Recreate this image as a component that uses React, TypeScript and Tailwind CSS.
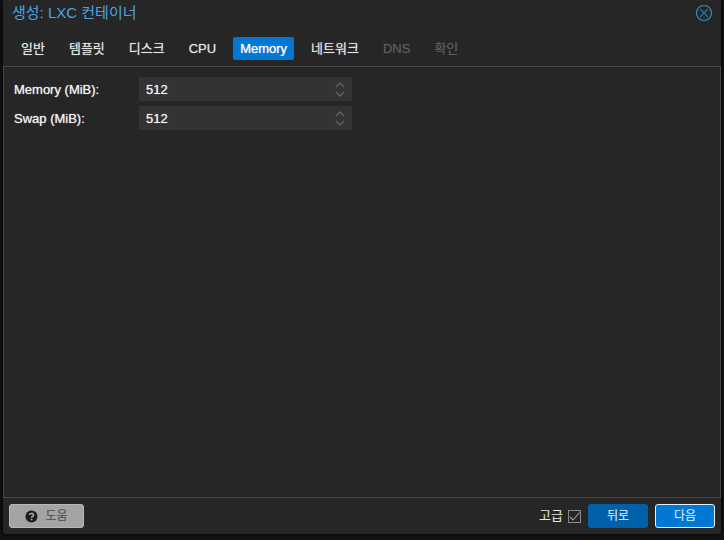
import { useState } from 'react';

interface Tab {
    label: string;
    enabled: boolean;
}

const tabs: Tab[] = [
    { label: '일반', enabled: true },
    { label: '템플릿', enabled: true },
    { label: '디스크', enabled: true },
    { label: 'CPU', enabled: true },
    { label: 'Memory', enabled: true },
    { label: '네트워크', enabled: true },
    { label: 'DNS', enabled: false },
    { label: '확인', enabled: false },
];

interface SpinnerFieldProps {
    id: string;
    label: string;
    value: number;
    onChange: (value: number) => void;
}

function SpinnerField({ id, label, value, onChange }: SpinnerFieldProps) {
    return (
        <div className="flex items-center">
            <label htmlFor={id} className="w-[125px] shrink-0 pt-0.5 text-[#f2f2f2] [text-shadow:0_0_1px_#cccccc]">
                {label}
            </label>
            <div className="flex h-6 w-[213px] items-center bg-[#333333]">
                <input
                    id={id}
                    type="text"
                    inputMode="numeric"
                    value={value}
                    onChange={(e) => onChange(Number(e.target.value) || 0)}
                    className="h-6 min-w-0 flex-1 bg-transparent px-[7px] text-[#f2f2f2] outline-none [text-shadow:0_0_1px_#cccccc]"
                />
                <div className="flex w-6 flex-col items-center">
                    <button type="button" aria-label="+" onClick={() => onChange(value + 32)} className="flex h-[9px] w-full items-center justify-center">
                        <svg width="10" height="6" viewBox="0 0 10 6" fill="none" stroke="#626262" strokeWidth="1.3">
                            <path d="M1 5 L5 1 L9 5" />
                        </svg>
                    </button>
                    <button type="button" aria-label="-" onClick={() => onChange(Math.max(0, value - 32))} className="flex h-[9px] w-full items-center justify-center">
                        <svg width="10" height="6" viewBox="0 0 10 6" fill="none" stroke="#626262" strokeWidth="1.3">
                            <path d="M1 1 L5 5 L9 1" />
                        </svg>
                    </button>
                </div>
            </div>
        </div>
    );
}

export default function App() {
    const [active, setActive] = useState('Memory');
    const [memory, setMemory] = useState(512);
    const [swap, setSwap] = useState(512);
    const [advanced, setAdvanced] = useState(true);

    return (
        <div className="flex min-h-screen flex-col bg-[#131313] px-[3px] pb-[6px] font-['Liberation_Sans','Noto_Sans_CJK_KR',sans-serif] text-[13px] leading-5">
            <div className="flex flex-1 flex-col rounded-b-[3px] bg-[#262626] shadow-[0_0_5px_#000000]">
                {/* Title bar */}
                <header className="flex h-[26px] items-center justify-between pr-2 pl-[9px]">
                    <h1 className="text-[15px] text-[#4ba3e3]">생성: LXC 컨테이너</h1>
                    <button type="button" aria-label="닫기">
                        <svg width="18" height="18" viewBox="0 0 18 18" fill="none" stroke="#2a94c6">
                            <circle cx="9" cy="9" r="7.5" strokeWidth="1.2" />
                            <path d="M5 5 L13 13 M13 5 L5 13" stroke="#1f7ba8" strokeWidth="1.2" />
                        </svg>
                    </button>
                </header>

                {/* Wizard steps */}
                <nav className="flex h-10 items-center gap-[10px] px-[11px] pt-[5px]">
                    {tabs.map((tab) => (
                        <button
                            key={tab.label}
                            type="button"
                            disabled={!tab.enabled}
                            onClick={() => setActive(tab.label)}
                            className={
                                tab.label === active
                                    ? 'h-[23px] rounded-xs bg-[#0078d4] px-[7px] text-white [text-shadow:0_0_1px_#dddddd]'
                                    : 'h-[23px] rounded-xs px-[7px] text-[#e6e6e6] [text-shadow:0_0_1px_#999999] disabled:text-[#5e5e5e] disabled:[text-shadow:0_0_1px_#444444]'
                            }
                        >
                            {tab.label}
                        </button>
                    ))}
                </nav>

                <main className="flex flex-1 flex-col gap-[5px] border border-[#474747] p-[10px]">
                    <SpinnerField id="memory" label="Memory (MiB):" value={memory} onChange={setMemory} />
                    <SpinnerField id="swap" label="Swap (MiB):" value={swap} onChange={setSwap} />
                </main>

                {/* Bottom toolbar */}
                <footer className="flex h-9 items-center justify-between px-[6px]">
                    <button type="button" className="flex h-6 w-[75px] items-center justify-center gap-[7px] rounded-[3px] border border-[#b8b8b8] bg-[#a3a3a3] text-xs text-[#484848]">
                        <svg width="13" height="13" viewBox="0 0 13 13" fill="none">
                            <circle cx="6.5" cy="6.5" r="6" fill="#1c1c1c" />
                            <path d="M4.4 5 C4.6 3 8.6 2.8 8.6 5 C8.6 6.3 6.6 6.2 6.6 7.7" stroke="#a3a3a3" strokeWidth="1.6" />
                            <rect x="5.7" y="8.7" width="1.8" height="1.6" fill="#a3a3a3" />
                        </svg>
                        도움
                    </button>
                    <div className="flex items-center gap-[7px]">
                        <label className="flex items-center gap-[5px] text-[#e6e6e6]">
                            고급
                            <span className="grid">
                                <input
                                    type="checkbox"
                                    checked={advanced}
                                    onChange={(e) => setAdvanced(e.target.checked)}
                                    className="peer col-start-1 row-start-1 size-[13px] appearance-none border border-[#8c8c8c]"
                                />
                                <svg className="pointer-events-none invisible col-start-1 row-start-1 peer-checked:visible" width="13" height="13" viewBox="0 0 13 13" fill="none" stroke="#a0a0a0" strokeWidth="1.1">
                                    <path d="M2 7 L5 10 L11.5 2.5" />
                                </svg>
                            </span>
                        </label>
                        <button type="button" className="h-6 w-[60px] rounded-[3px] bg-[#0060aa] text-xs text-[#f2f2f2]">
                            뒤로
                        </button>
                        <button type="button" className="h-6 w-[60px] rounded-[3px] border border-[#e6f1fa] bg-[#0078d4] text-xs text-[#f2f2f2]">
                            다음
                        </button>
                    </div>
                </footer>
            </div>
        </div>
    );
}
